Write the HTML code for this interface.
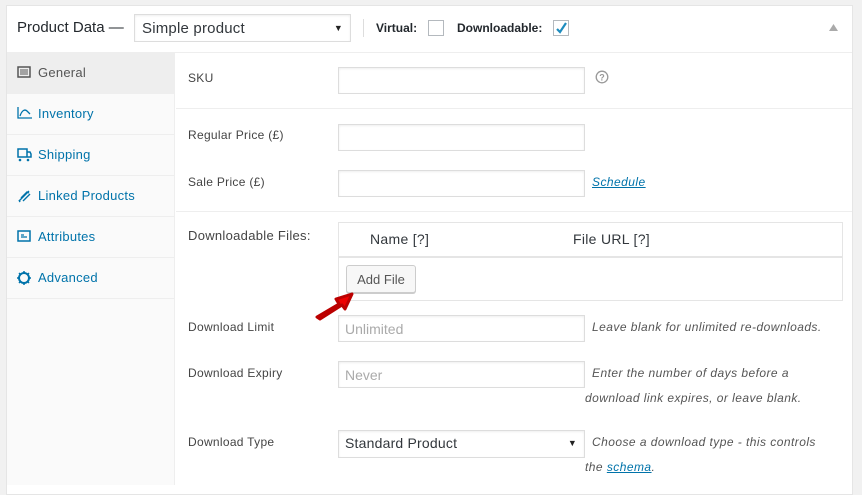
<!DOCTYPE html>
<html><head><meta charset="utf-8"><style>
*{margin:0;padding:0;box-sizing:border-box}
body{width:862px;height:485px;background:#f1f1f1;font-family:"Liberation Sans",sans-serif;position:relative;overflow:hidden;color:#444}
.a{position:absolute}
#panel{left:6px;top:5px;width:847px;height:490px;background:#fff;border:1px solid #e5e5e5}
.inp{position:absolute;background:#fff;border:1px solid #ddd;box-shadow:inset 0 1px 2px rgba(0,0,0,.07);height:27px}
.lbl{position:absolute;font-size:12px;color:#444;left:188px;letter-spacing:.3px}
.nav{position:absolute;left:7px;width:168px;height:41px;border-bottom:1px solid #eee;font-size:13px;color:#0073aa;padding:12px 0 0 31px;letter-spacing:.25px}
.nav svg{position:absolute;left:10px;top:13px}
.desc{position:absolute;font-size:12px;font-style:italic;color:#555;letter-spacing:.45px}
.ph{font-size:14px;color:#aaa;padding:5px 6px}
.sel{font-size:14px;color:#32373c;padding:4px 6px;letter-spacing:.2px}
.arr{position:absolute;right:7px;top:7px;font-size:9px;color:#222}
</style></head><body>
<div id="panel" class="a"></div>
<div class="a" style="left:7px;top:52px;width:845px;height:1px;background:#eee"></div>
<div class="a" style="left:17px;top:19px;font-size:15px;color:#23282d">Product Data —</div>
<div class="inp sel" style="left:134px;top:14px;width:217px;height:28px;font-size:15px;padding:5px 7px">Simple product<span class="arr" style="top:8px">▼</span></div>
<div class="a" style="left:363px;top:19px;width:1px;height:18px;background:#ddd"></div>
<div class="a" style="left:376px;top:21px;font-size:12px;color:#23282d;font-weight:bold">Virtual:</div>
<div class="a" style="left:428px;top:20px;width:16px;height:16px;border:1px solid #b4b9be;background:#fff"></div>
<div class="a" style="left:457px;top:21px;font-size:12px;color:#23282d;font-weight:bold">Downloadable:</div>
<div class="a" style="left:553px;top:20px;width:16px;height:16px;border:1px solid #b4b9be;background:#fff"><svg width="14" height="14" viewBox="0 0 14 14" style="position:absolute;left:0;top:0"><path d="M3 8l3 3 6-9" stroke="#1e8cbe" stroke-width="2.2" fill="none"/></svg></div>
<svg class="a" style="left:829px;top:24px" width="9" height="7"><path d="M0 7L4.5 0 9 7z" fill="#aaa"/></svg>

<div class="a" style="left:7px;top:53px;width:168px;height:432px;background:#fafafa;border-right:1px solid #eee"></div>
<div class="nav" style="top:53px;background:#eee;color:#555"><svg width="14" height="12"><rect x="1" y="1" width="12" height="10" fill="none" stroke="#555" stroke-width="1.5"/><path d="M4 3v6M6 3v6M8 3v6M10 3v6" stroke="#555"/></svg>General</div>
<div class="nav" style="top:94px"><svg width="15" height="12"><path d="M1 0v11h14M3 9c2-6 5-7 7-5l3 3" stroke="#0073aa" fill="none" stroke-width="1.3"/></svg>Inventory</div>
<div class="nav" style="top:135px"><svg width="15" height="14"><path d="M1 1h9v8H1zM10 4h3l1 2v3h-4" stroke="#0073aa" fill="none" stroke-width="1.5"/><circle cx="3" cy="12" r="1.3" fill="#0073aa"/><circle cx="11" cy="12" r="1.3" fill="#0073aa"/></svg>Shipping</div>
<div class="nav" style="top:176px"><svg width="15" height="14"><path d="M2 12L12 2M4 9l6-6 2 1M3 13l-1-2M6 12l7-7" stroke="#0073aa" fill="none" stroke-width="1.4"/></svg>Linked Products</div>
<div class="nav" style="top:217px"><svg width="14" height="12"><rect x="1" y="1" width="12" height="10" fill="none" stroke="#0073aa" stroke-width="1.5"/><path d="M4 5h3M4 7h6" stroke="#0073aa" stroke-width="1.3"/></svg>Attributes</div>
<div class="nav" style="top:258px"><svg width="14" height="14"><circle cx="7" cy="7" r="5" fill="none" stroke="#0073aa" stroke-width="2"/><path d="M7 0v3M7 11v3M0 7h3M11 7h3M2 2l2 2M10 10l2 2M2 12l2-2M10 4l2-2" stroke="#0073aa" stroke-width="1.5"/></svg>Advanced</div>

<div class="lbl" style="top:71px">SKU</div>
<div class="inp" style="left:338px;top:67px;width:247px"></div>
<svg class="a" style="left:595px;top:70px" width="14" height="14"><circle cx="7" cy="7" r="5.8" fill="none" stroke="#999" stroke-width="1.3"/><text x="7" y="10.5" font-size="9" font-weight="bold" text-anchor="middle" fill="#999" font-family="Liberation Sans">?</text></svg>
<div class="a" style="left:176px;top:108px;width:676px;height:1px;background:#eee"></div>
<div class="lbl" style="top:128px">Regular Price (£)</div>
<div class="inp" style="left:338px;top:124px;width:247px"></div>
<div class="lbl" style="top:175px">Sale Price (£)</div>
<div class="inp" style="left:338px;top:170px;width:247px"></div>
<div class="desc" style="left:592px;top:175px;color:#0073aa;text-decoration:underline">Schedule</div>
<div class="a" style="left:176px;top:211px;width:676px;height:1px;background:#eee"></div>

<div class="lbl" style="top:228px;font-size:13px">Downloadable Files:</div>
<div class="a" style="left:338px;top:222px;width:505px;height:79px;border:1px solid #e5e5e5"></div>
<div class="a" style="left:339px;top:256px;width:503px;height:2px;background:#e5e5e5"></div>
<div class="a" style="left:370px;top:231px;font-size:14px;color:#32373c;letter-spacing:.3px">Name <span>[?]</span></div>
<div class="a" style="left:573px;top:231px;font-size:14px;color:#32373c;letter-spacing:.3px">File URL <span>[?]</span></div>
<div class="a" style="left:346px;top:265px;width:70px;height:28px;border:1px solid #ccc;background:#f7f7f7;border-radius:3px;box-shadow:0 1px 0 #ccc;font-size:13px;color:#555;text-align:center;padding-top:6px">Add File</div>
<svg class="a" style="left:312px;top:288px" width="44" height="36"><path d="M5 29l22-13-3-5 16-5-7 15-3-4-22 14z" fill="#e00" stroke="#b00" stroke-width="3" stroke-linejoin="round"/></svg>

<div class="lbl" style="top:320px">Download Limit</div>
<div class="inp ph" style="left:338px;top:315px;width:247px">Unlimited</div>
<div class="desc" style="left:592px;top:320px">Leave blank for unlimited re-downloads.</div>
<div class="lbl" style="top:366px">Download Expiry</div>
<div class="inp ph" style="left:338px;top:361px;width:247px">Never</div>
<div class="desc" style="left:592px;top:366px">Enter the number of days before a</div>
<div class="desc" style="left:585px;top:391px">download link expires, or leave blank.</div>
<div class="lbl" style="top:435px">Download Type</div>
<div class="inp sel" style="left:338px;top:430px;width:247px;height:28px">Standard Product<span class="arr">▼</span></div>
<div class="desc" style="left:592px;top:435px">Choose a download type - this controls</div>
<div class="desc" style="left:585px;top:460px">the <span style="color:#0073aa;text-decoration:underline">schema</span>.</div>
</body></html>
